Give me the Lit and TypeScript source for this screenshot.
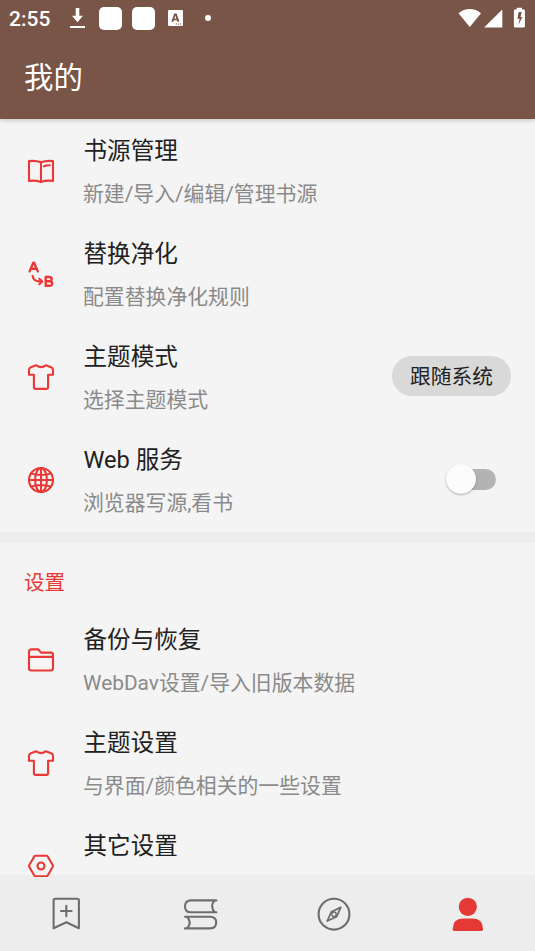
import {LitElement, html, svg, css, nothing} from 'lit';
import {customElement, property} from 'lit/decorators.js';
import {classMap} from 'lit/directives/class-map.js';

const ICONS: Record<string, unknown> = {
  book: svg`
    <path d="M15 6.3C12 5.1 7.3 4.6 3 5.1V24.9C7.3 24.4 12 24.9 15 26C18 24.9 22.7 24.4 27 24.9V5.1C22.7 4.6 18 5.1 15 6.3ZM15 6.3V26M18 10.2C19.7 9.6 21.5 9.3 23.7 9.2" />
  `,
  replace: svg`
    <path class="letter" d="M3.6 12.4L7.3 3.6H8.1L11.8 12.4M5 9.8H10.4" />
    <path class="letter" d="M19.7 18H23.2C26.5 18 26.5 22.2 23.2 22.2H19.7M23.2 22.2C27.2 22.2 27.1 26.8 23.5 26.8H19.7V18" />
    <path d="M6.6 16.8C7 20.7 10 22.7 15.8 22.6M13.3 19.7L16.3 22.6L13.3 25.2" />
  `,
  shirt: svg`
    <path d="M10.3 3.3C12.4 5.7 17.6 5.7 19.7 3.3L25.2 5.2C26.4 5.7 27 6.6 27 7.8V12.7H22.1V25C22.1 26.2 21.5 26.9 20.3 26.9H9.7C8.5 26.9 7.9 26.2 7.9 25V12.7H3V7.8C3 6.6 3.6 5.7 4.8 5.2Z" />
  `,
  globe: svg`
    <circle cx="15" cy="15" r="12" />
    <ellipse cx="15" cy="15" rx="5.9" ry="12" />
    <path d="M15 3V27M3 15H27M5.2 8.4C10.3 10.6 19.7 10.6 24.8 8.4M5.2 21.6C10.3 19.4 19.7 19.4 24.8 21.6" />
  `,
  folder: svg`
    <path d="M3 23.8V6.7C3 5.2 3.8 4.4 5.3 4.4H12.3L15 7.6H24.7C26.2 7.6 27 8.4 27 9.9V23.3C27 24.8 26.2 25.5 24.7 25.5H5.3C3.8 25.5 3 24.8 3 23.8ZM3 11.9H27" />
  `,
  hexagon: svg`
    <path d="M9.5 4.7H20.5C21.1 4.7 21.4 5 21.7 5.5L26.8 14.3C27 14.8 27 15.2 26.8 15.7L21.7 24.5C21.4 25 21.1 25.3 20.5 25.3H9.5C8.9 25.3 8.6 25 8.3 24.5L3.2 15.7C3 15.2 3 14.8 3.2 14.3L8.3 5.5C8.6 5 8.9 4.7 9.5 4.7Z" />
    <circle cx="15" cy="15" r="3.5" />
  `,
};

interface Entry {
  icon: string;
  title: string;
  summary?: string;
  control?: 'select' | 'switch';
}

const SOURCES: Entry[] = [
  {icon: 'book', title: '书源管理', summary: '新建/导入/编辑/管理书源'},
  {icon: 'replace', title: '替换净化', summary: '配置替换净化规则'},
  {
    icon: 'shirt',
    title: '主题模式',
    summary: '选择主题模式',
    control: 'select',
  },
  {
    icon: 'globe',
    title: 'Web 服务',
    summary: '浏览器写源,看书',
    control: 'switch',
  },
];

const SETTINGS: Entry[] = [
  {icon: 'folder', title: '备份与恢复', summary: 'WebDav设置/导入旧版本数据'},
  {icon: 'shirt', title: '主题设置', summary: '与界面/颜色相关的一些设置'},
  {icon: 'hexagon', title: '其它设置'},
];

@customElement('status-bar')
class StatusBar extends LitElement {
  static override styles = css`
    :host {
      display: flex;
      align-items: center;
      height: 36px;
      padding: 0 9px;
      color: white;
      font: 500 21px/36px Roboto, sans-serif;
    }

    svg {
      display: block;
      fill: white;
    }

    .time {
      width: 60px;
      padding-top: 1px;
    }

    .download {
      margin-right: 13px;
    }

    .app {
      width: 23px;
      height: 23px;
      margin-right: 10px;
      border-radius: 5px;
      background: white;
    }

    .letter {
      margin: 0 22px 0 3px;
    }

    .dot {
      width: 6px;
      height: 6px;
      border-radius: 50%;
      background: white;
    }

    .system {
      margin-left: auto;
    }
  `;

  override render() {
    return html`
      <span class="time">2:55</span>
      <svg class="download" width="17" height="22" viewBox="0 0 17 22">
        <path d="M6.7 1H10.3V8.8H14L8.5 15.2L3 8.8H6.7ZM1 18.9H16V21H1Z" />
      </svg>
      <span class="app"></span>
      <span class="app"></span>
      <svg class="letter" width="15" height="16" viewBox="0 0 15 16">
        <path
          fill-rule="evenodd"
          d="M1.3 0H13.7Q15 0 15 1.3V14.7Q15 16 13.7 16H1.3Q0 16 0 14.7V1.3Q0 0 1.3 0ZM6.3 3.4L3.4 11.8H5.4L5.9 10.2H8.9L9.4 11.8H11.5L8.6 3.4ZM7.4 5.6L8.4 8.7H6.4ZM7.8 13.6V14.5H9V13.6ZM9.9 13.6V14.5H11.1V13.6ZM12 13.6V14.5H13.2V13.6Z"
        />
      </svg>
      <span class="dot"></span>
      <svg class="system" width="68" height="22" viewBox="0 0 68 22">
        <path d="M0.5 6.2C7 0.5 16.5 0.5 23 6.2L11.8 20Z" />
        <path d="M44.3 2.4V20.5H26.1Z" />
        <path
          fill-rule="evenodd"
          d="M58.7 0.8H64V2.5H65.8Q66.9 2.5 66.9 3.6V19.4Q66.9 20.5 65.8 20.5H57Q55.9 20.5 55.9 19.4V3.6Q55.9 2.5 57 2.5H58.7ZM60.6 5.1L59.5 11.8H61.6L60.4 17.9L64.4 10H62.5L63.7 5.1Z"
        />
      </svg>
    `;
  }
}

@customElement('setting-row')
class SettingRow extends LitElement {
  static override styles = css`
    :host {
      display: flex;
      align-items: center;
      height: 103px;
      padding: 0 24px;
      box-sizing: border-box;
    }

    .icon {
      flex: none;
      width: 30px;
      height: 30px;
      margin: 0 27px 0 2px;
      fill: none;
      stroke: #e93835;
      stroke-width: 2.1;
      stroke-linejoin: round;
      stroke-linecap: round;
    }

    .icon .letter {
      stroke-width: 2.4;
    }

    .text {
      flex: 1;
      height: 76px;
      white-space: nowrap;
    }

    .title {
      height: 35px;
      padding-left: 0.5px;
      font-size: 23.6px;
      line-height: 36px;
      color: #212121;
    }

    .summary {
      height: 31px;
      margin-top: 10px;
      font-size: 20.85px;
      line-height: 32px;
      color: #8a8a8a;
    }

    .select {
      width: 119px;
      height: 40px;
      margin-top: -2px;
      border-radius: 20px;
      background: #d9d9d9;
      color: #212121;
      font-size: 20.7px;
      line-height: 43px;
      text-align: center;
    }

    .switch {
      display: flex;
      align-items: center;
      width: 42px;
      height: 21px;
      margin: -2px 15.5px 0 0;
      border-radius: 11px;
      background: #b3b3b3;
    }

    .thumb {
      flex: none;
      width: 30px;
      height: 30px;
      margin-left: -8px;
      border-radius: 50%;
      background: #fcfcfc;
      box-shadow: 0 1px 2px rgba(0, 0, 0, 0.3);
    }
  `;

  @property({attribute: false})
  entry!: Entry;

  private renderControl() {
    switch (this.entry.control) {
      case 'select':
        return html`<div class="select">跟随系统</div>`;
      case 'switch':
        return html`<div class="switch"><div class="thumb"></div></div>`;
      default:
        return nothing;
    }
  }

  override render() {
    const {icon, title, summary} = this.entry;
    return html`
      <svg class="icon" viewBox="0 0 30 30">${ICONS[icon]}</svg>
      <div class="text">
        <div class="title">${title}</div>
        ${summary ? html`<div class="summary">${summary}</div>` : nothing}
      </div>
      ${this.renderControl()}
    `;
  }
}

@customElement('bottom-nav')
class BottomNav extends LitElement {
  static override styles = css`
    :host {
      display: flex;
      height: 76px;
      background: #ededed;
    }

    .tab {
      flex: 1;
      display: flex;
      align-items: center;
      justify-content: center;
      padding-top: 2px;
    }

    svg {
      width: 36px;
      height: 36px;
      fill: none;
      stroke: #6e6e6e;
      stroke-width: 2.1;
      stroke-linejoin: round;
      stroke-linecap: round;
    }

    .active svg {
      fill: #e53935;
      stroke: none;
    }
  `;

  @property({type: Number})
  selected = 3;

  private tabs = [
    svg`<path d="M6.1 2.7H28.3Q29.9 2.7 29.9 4.3V32.3L17.4 26.2L4.6 32.3V4.3Q4.6 2.7 6.1 2.7ZM17.3 9.7V20.2M12 15H22.6" />`,
    svg`<path d="M33.4 4.4H8Q2 4.6 2 10.4Q2 16.2 8 16.2H33.4M31.6 4.4Q26.6 10.2 31.6 16.2M2 20.8H27Q33.2 21 33.2 26.6Q33.2 32.3 27 32.4H2M4 20.8Q9.4 26.6 4 32.4" />`,
    svg`<circle cx="18" cy="18.2" r="15.4" /><path d="M24.8 11.4L20.6 20.6L11.2 25L15.4 15.8Z" stroke-width="1.8" /><circle cx="18" cy="18.2" r="2.2" stroke-width="1.3" />`,
    svg`<circle cx="17.8" cy="10.8" r="9.1" /><path d="M12.6 22.5H23Q33 22.9 33 32.9V33.5Q33 34.9 31.6 34.9H4.1Q2.7 34.9 2.7 33.5V32.9Q2.7 22.9 12.6 22.5Z" />`,
  ];

  override render() {
    return this.tabs.map(
      (icon, i) => html`
        <div class=${classMap({tab: true, active: i === this.selected})}>
          <svg viewBox="0 0 36 36">${icon}</svg>
        </div>
      `
    );
  }
}

@customElement('app-root')
class AppRoot extends LitElement {
  static override styles = css`
    :host {
      display: flex;
      flex-direction: column;
      width: 535px;
      height: 951px;
      overflow: hidden;
      background: #f4f4f4;
      font-family: Roboto, 'Noto Sans CJK SC', sans-serif;
    }

    .header {
      flex: none;
      height: 119px;
      background: #795548;
      box-shadow: 0 1px 5px rgba(0, 0, 0, 0.22);
      z-index: 1;
    }

    .header__title {
      padding: 0 24px;
      color: white;
      font-size: 29.4px;
      line-height: 84px;
    }

    /* The list runs slightly over the top edge of the navigation. */
    .content {
      flex: 1;
      min-height: 0;
      margin-bottom: -2px;
      padding-top: 0.5px;
      overflow: hidden;
      z-index: 1;
    }

    .divider {
      height: 11.5px;
      background: #ededed;
    }

    .section {
      height: 65px;
      padding: 0 24px;
      color: #e93835;
      font-size: 20.6px;
      line-height: 81px;
    }

    .nav {
      flex: none;
    }
  `;

  private renderRows(entries: Entry[]) {
    return entries.map(
      (entry) => html`<setting-row .entry=${entry}></setting-row>`
    );
  }

  override render() {
    return html`
      <div class="header">
        <status-bar></status-bar>
        <div class="header__title">我的</div>
      </div>
      <div class="content">
        ${this.renderRows(SOURCES)}
        <div class="divider"></div>
        <div class="section">设置</div>
        ${this.renderRows(SETTINGS)}
      </div>
      <bottom-nav class="nav"></bottom-nav>
    `;
  }
}

declare global {
  interface HTMLElementTagNameMap {
    'status-bar': StatusBar;
    'setting-row': SettingRow;
    'bottom-nav': BottomNav;
    'app-root': AppRoot;
  }
}
